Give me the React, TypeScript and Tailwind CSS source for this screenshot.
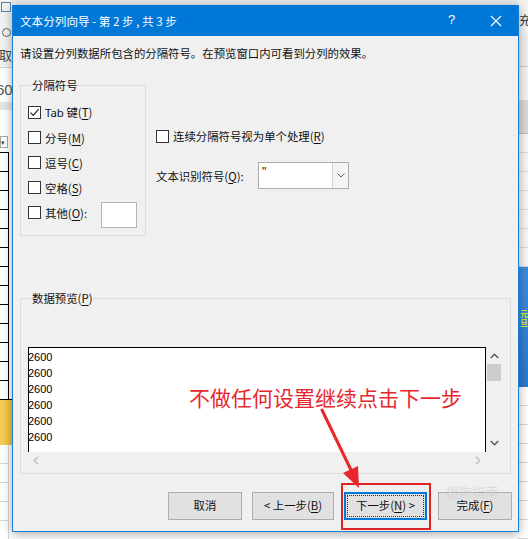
import React from 'react';

// underlined access key letter
function U({ children }: { children: React.ReactNode }) {
  return <span className="underline decoration-1 underline-offset-[2px]">{children}</span>;
}

function Box({ checked }: { checked?: boolean }) {
  return (
    <span className="w-[13px] h-[13px] border border-[#333333] bg-white flex items-center justify-center shrink-0">
      {checked && (
        <svg width="11" height="11" viewBox="0 0 11 11">
          <path d="M1.5 5.6 L4.3 8.4 L9.6 2.2" fill="none" stroke="#222" strokeWidth="1.2" />
        </svg>
      )}
    </span>
  );
}

function Check({ checked, children }: { checked?: boolean; children: React.ReactNode }) {
  return (
    <div className="h-[25px] flex items-center gap-[4px]">
      <Box checked={checked} />
      <span className="leading-[16px]">{children}</span>
    </div>
  );
}

function Btn({ w, focus, children }: { w: string; focus?: boolean; children: React.ReactNode }) {
  if (focus) {
    return (
      <div className={`${w} h-[28px] border-2 border-[#0078d7] bg-[#e1e1e1] p-[1px]`}>
        <div className="h-full border border-dotted border-[#333] flex items-center justify-center">{children}</div>
      </div>
    );
  }
  return (
    <div className={`${w} h-[28px] border border-[#adadad] bg-[#e1e1e1] flex items-center justify-center`}>
      {children}
    </div>
  );
}

const rows = [2600, 2600, 2600, 2600, 2600, 2600];

export default function App() {
  return (
    <div className="relative w-[528px] h-[539px] overflow-hidden bg-white font-['Noto_Sans_CJK_SC','Noto_Sans',sans-serif] text-[11.4px] text-[#111]">
      {/* excel behind the dialog */}
      <div className="absolute left-0 top-0 w-[528px] h-[6px] bg-[#e9e9e9]" />
      <div className="absolute left-0 top-0 w-[12px] h-[539px] bg-white">
        <div className="h-[68px] bg-[#f3f3f3] border-b border-[#d4d4d4] relative">
          <div className="absolute left-[1px] top-[2px] w-[10px] h-[10px] border border-[#5a7fb0]" />
          <div className="absolute left-[2px] top-[28px] w-[9px] h-[9px] rounded-full border border-[#666]" />
          <div className="absolute -left-[1px] top-[47px] text-[13px] leading-[16px] text-[#444]">取</div>
        </div>
        <div className="h-[34px] relative">
          <div className="absolute -left-[4px] top-[14px] text-[15px] leading-[16px] text-[#555] font-['Liberation_Sans',sans-serif]">60</div>
        </div>
        <div className="h-[8px] bg-[#e6e6e6]" />
        <div className="h-[42px] relative">
          <div className="absolute left-0 top-[26px] w-[8px] h-[12px] border border-[#aaa] text-[7px] leading-[10px] text-[#444]">▾</div>
        </div>
        <div className="border-r border-black w-[9px]">
          {Array.from({ length: 13 }).map((_, i) => (
            <div key={i} className="h-[19px] border-t border-black" />
          ))}
        </div>
        <div className="h-[46px] bg-gradient-to-r from-[#f6cf55] to-[#f2c23a] border-t border-black" />
        {Array.from({ length: 5 }).map((_, i) => (
          <div key={i} className="h-[19px] border-b border-r border-[#d6d6d6] w-[9px]" />
        ))}
      </div>
      <div className="absolute left-[518px] top-0 w-[10px] h-[539px] bg-white">
        <div className="h-[36px] bg-[#f3f3f3] relative">
          <div className="absolute left-[1px] top-[12px] text-[12px] leading-[16px] text-[#333]">充</div>
        </div>
        <div className="h-[31px] bg-[#f0f0f0] border-b border-[#d0d0d0]" />
        <div className="h-[33px] bg-[#f4f4f4]" />
        <div className="h-[34px] bg-[#d9d9d9] border-b border-[#bbb]" />
        {Array.from({ length: 7 }).map((_, i) => (
          <div key={i} className="h-[19px] border-b border-[#dadada] bg-[#f7f7f7]" />
        ))}
        <div className="h-[120px] bg-gradient-to-b from-[#3b8de0] to-[#2a78cf] relative">
          <div className="absolute left-[2px] top-[42px] text-[8px] leading-[9px] text-[#d8e94a] font-bold">元<br />旦</div>
        </div>
        {Array.from({ length: 8 }).map((_, i) => (
          <div key={i} className="h-[19px] border-b border-[#d6d6d6]" />
        ))}
      </div>

      {/* dialog */}
      <div className="absolute left-[12px] top-[5px] w-[507px] bg-[#f0f0f0] border-x border-b border-[#1c7fd6] shadow-[0_2px_10px_rgba(0,0,0,0.35)]">
        <div className="h-[31px] bg-[#0078d7] text-white flex items-center pl-[7px] relative">
          <span className="text-[11.6px] leading-[16px]">文本分列向导 - 第 2 步 , 共 3 步</span>
          <span className="absolute left-[435px] top-[7px] text-[13px] leading-[16px] font-['Liberation_Sans',sans-serif]">?</span>
          <svg className="absolute left-[477px] top-[10px]" width="12" height="12" viewBox="0 0 12 12">
            <path d="M1 1 L11 11 M11 1 L1 11" stroke="white" strokeWidth="1.1" />
          </svg>
        </div>

        <div className="pl-[7px] pr-[6px] pb-[11px]">
          <div className="mt-[9px] leading-[16px]">请设置分列数据所包含的分隔符号。在预览窗口内可看到分列的效果。</div>

          <div className="flex mt-[16px]">
            <fieldset className="w-[126px] border border-[#dcdcdc] pl-[7px] pt-[7px] pb-[10px]">
              <legend className="ml-[4px] leading-[16px]">分隔符号</legend>
              <Check checked>
                <span className="font-['Noto_Sans',sans-serif]">Tab</span> 键(<U>T</U>)
              </Check>
              <Check>分号(<U>M</U>)</Check>
              <Check>逗号(<U>C</U>)</Check>
              <Check>空格(<U>S</U>)</Check>
              <div className="h-[25px] flex items-center gap-[4px]">
                <Box />
                <span className="leading-[16px]">其他(<U>O</U>):</span>
                <div className="ml-[10px] mt-[4px] w-[36px] h-[26px] bg-white border border-[#b5b5b5]" />
              </div>
            </fieldset>

            <div className="ml-[10px] pt-[51px]">
              <div className="h-[16px] flex items-center gap-[4px]">
                <Box />
                <span className="leading-[16px]">连续分隔符号视为单个处理(<U>R</U>)</span>
              </div>
              <div className="mt-[18px] flex items-center">
                <span className="w-[102px] leading-[16px]">文本识别符号(<U>Q</U>):</span>
                <div className="w-[91px] h-[27px] bg-white border border-[#adadad] flex">
                  <div className="flex-1 pl-[3px] pt-[1px] text-[12px] leading-[16px] font-['Liberation_Sans',sans-serif]">"</div>
                  <div className="w-[16px] border-l border-[#cfcfcf] bg-[#f4f4f4] flex items-center justify-center">
                    <svg width="8" height="5" viewBox="0 0 8 5">
                      <path d="M0.5 0.5 L4 4 L7.5 0.5" fill="none" stroke="#666" strokeWidth="1" />
                    </svg>
                  </div>
                </div>
              </div>
            </div>
          </div>

          <fieldset className="mt-[54px] w-[491px] border border-[#dcdcdc] pl-[7px] pr-[8px] pt-[41px] pb-[5px]">
            <legend className="ml-[4px] leading-[16px]">数据预览(<U>P</U>)</legend>
            <div className="flex">
              <div className="w-[458px] h-[105px] bg-white border-l border-t border-r border-black pt-[1px] font-['Liberation_Sans',sans-serif] text-[11px] leading-[16px] text-black">
                {rows.map((r, i) => (
                  <div key={i} className="-ml-[1px]">{r}</div>
                ))}
              </div>
              <div className="w-[16px] h-[105px] flex flex-col items-center">
                <svg className="mt-[6px]" width="9" height="6" viewBox="0 0 9 6">
                  <path d="M0.8 5 L4.5 1.2 L8.2 5" fill="none" stroke="#555" strokeWidth="1.4" />
                </svg>
                <div className="mt-[5px] w-[14px] h-[17px] bg-[#cdcdcd]" />
                <svg className="mt-auto mb-[6px]" width="9" height="6" viewBox="0 0 9 6">
                  <path d="M0.8 1 L4.5 4.8 L8.2 1" fill="none" stroke="#555" strokeWidth="1.4" />
                </svg>
              </div>
            </div>
            <div className="h-[16px] flex items-center justify-between w-[458px] px-[5px]">
              <svg width="6" height="9" viewBox="0 0 6 9">
                <path d="M5 0.8 L1.2 4.5 L5 8.2" fill="none" stroke="#c2c2c2" strokeWidth="1.4" />
              </svg>
              <svg width="6" height="9" viewBox="0 0 6 9">
                <path d="M1 0.8 L4.8 4.5 L1 8.2" fill="none" stroke="#c2c2c2" strokeWidth="1.4" />
              </svg>
            </div>
          </fieldset>

          <div className="mt-[18px] flex justify-end">
            <Btn w="w-[74px]">取消</Btn>
            <div className="ml-[10px]">
              <Btn w="w-[82px]">&lt; 上一步(<U>B</U>)</Btn>
            </div>
            <div className="ml-[10px]">
              <Btn w="w-[83px]" focus>下一步(<U>N</U>) &gt;</Btn>
            </div>
            <div className="ml-[11px]">
              <Btn w="w-[74px]">完成(<U>F</U>)</Btn>
            </div>
          </div>
        </div>
      </div>

      {/* annotation */}
      <div className="absolute left-[446px] top-[485px] text-[13px] leading-[14px] text-[#d2d2d2] opacity-70 pointer-events-none">搜狗指南</div>
      <div className="absolute left-[189px] top-[384px] text-[21px] leading-[26px] text-[#e8262c] whitespace-nowrap">不做任何设置继续点击下一步</div>
      <div className="absolute left-[341px] top-[483px] w-[90px] h-[47px] border-2 border-[#e02424] pointer-events-none" />
      <svg className="absolute left-0 top-0 pointer-events-none" width="528" height="539" viewBox="0 0 528 539">
        <path d="M322 410 L351 470" stroke="#e8262c" strokeWidth="3" strokeLinecap="round" />
        <polygon points="359,488 343,473 358,466" fill="#e8262c" />
      </svg>
    </div>
  );
}
